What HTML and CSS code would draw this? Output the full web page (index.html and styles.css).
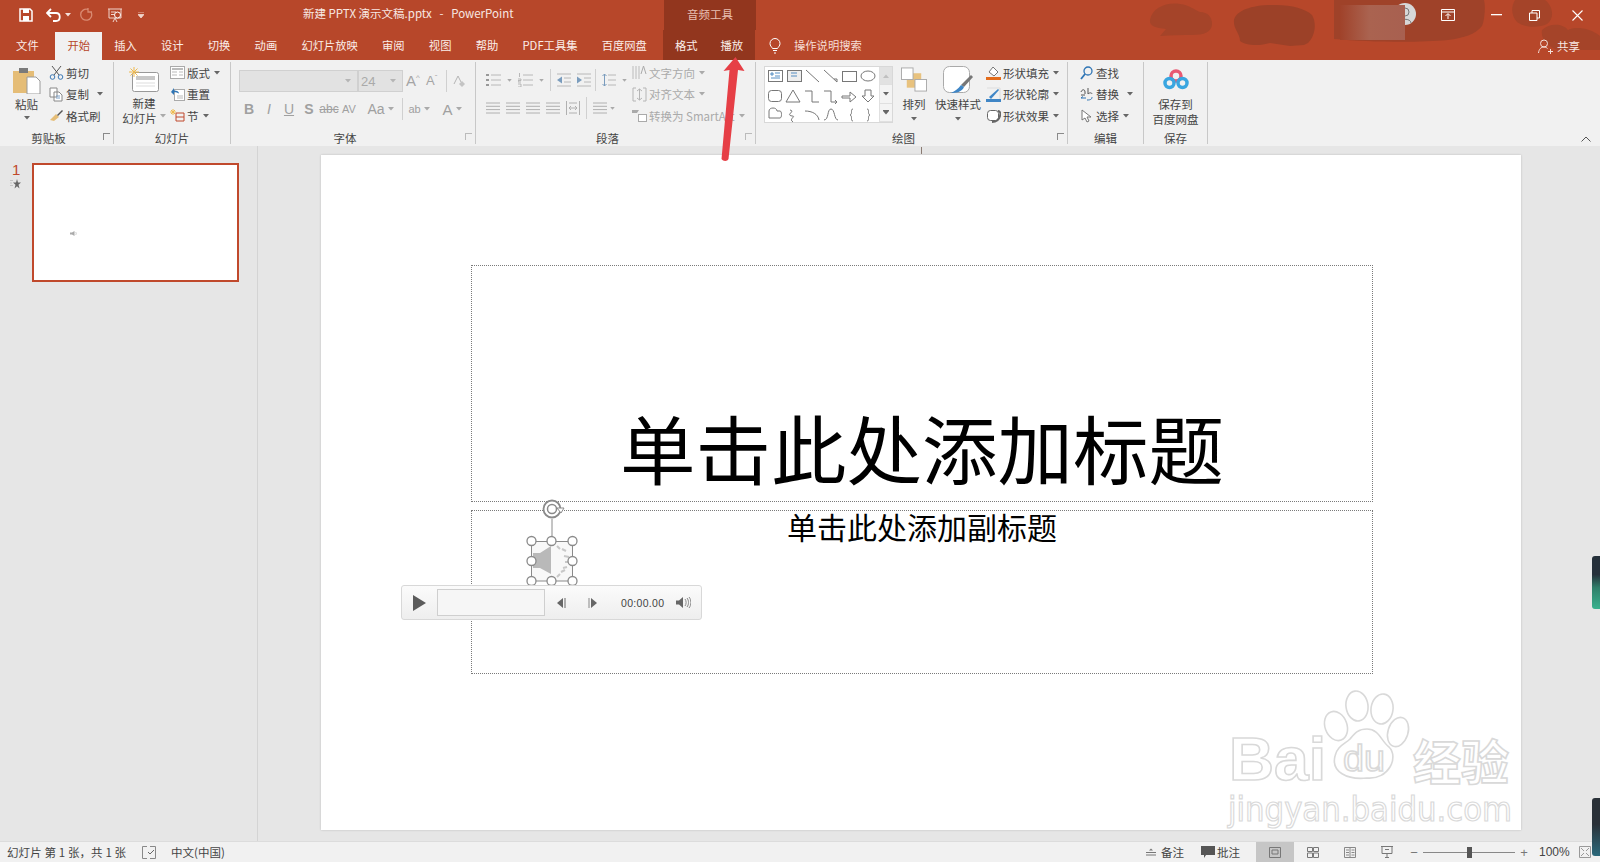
FILE: index.html
```html
<!DOCTYPE html>
<html lang="zh-CN">
<head>
    <meta charset="UTF-8">
    <title>新建 PPTX 演示文稿.pptx - PowerPoint</title>
    <link rel="stylesheet" href="styles.css">
</head>
<body>
<svg class="defs" width="0" height="0">
    <symbol id="lines" viewBox="0 0 14 14"><path d="M0 2h14M0 5.300h14M0 8.600h14M0 12h14" stroke="#b0b0b0" fill="none"/></symbol>
    <symbol id="bullets" viewBox="0 0 15 14"><path d="M5 2h10M5 7h10M5 12h10" stroke="#b8b8b8" fill="none"/><path d="M0 1h3v2H0zM0 6h3v2H0zM0 11h3v2H0z" fill="#999"/></symbol>
    <symbol id="numbers" viewBox="0 0 15 14"><path d="M5 2h10M5 7h10M5 12h10" stroke="#b8b8b8" fill="none"/><path d="M1.500 0v4M0 6h3v1.500H0V9h3M0 11h3v3H0" stroke="#aaa" fill="none" stroke-width="0.800"/></symbol>
    <symbol id="outdent" viewBox="0 0 14 14"><path d="M0 1h14M7 5h7M7 9h7M0 13h14" stroke="#b8b8b8" fill="none"/><path d="M5 3.500v7L0 7z" fill="#7a9cbd"/></symbol>
    <symbol id="indent" viewBox="0 0 14 14"><path d="M0 1h14M7 5h7M7 9h7M0 13h14" stroke="#b8b8b8" fill="none"/><path d="M0 3.500v7L5 7z" fill="#7a9cbd"/></symbol>
    <symbol id="spacing" viewBox="0 0 14 14"><path d="M6 2h8M6 7h8M6 12h8" stroke="#b8b8b8" fill="none"/><path d="M2.500 1v12M.5 3l2-2 2 2M.5 11l2 2 2-2" stroke="#7a9cbd" fill="none"/></symbol>
    <symbol id="distribute" viewBox="0 0 14 14"><path d="M.5 0v14M13.500 0v14M3 2h8M3 12h8M3 7h8M3 7l2-2M3 7l2 2M11 7L9 5M11 7L9 9" stroke="#b0b0b0" fill="none"/></symbol>
    <symbol id="caret" viewBox="0 0 6 4"><path d="M0 0h6L3 3.500z" fill="currentColor"/></symbol>
</svg>
<div class="app">
    <header class="chrome">
        <svg class="blobs" width="470" height="60" viewBox="1130 0 470 60">
            <defs><linearGradient id="blur" x1="0" x2="1"><stop offset="0" stop-color="#a0422a"/><stop offset="0.45" stop-color="#aa6350"/><stop offset="1" stop-color="#a86050"/></linearGradient></defs>
            <path d="M1150 20c2-12 16-18 30-16 10 1 14 6 20 8 8 0 12 5 12 12 0 8-8 11-20 11-10 0-20 0-32 1l6-7c-10-1-17-3-16-9z" fill="#a54429"/>
            <path d="M1234 20c2-10 20-16 42-15 16 0 30 4 36 10 5 8 3 22-4 28l-4 2-14 1-20-3c-10 3-24 3-30-2 0-8-7-12-6-21z" fill="#9c4128"/>
            <path d="M1334 0h150c2 8 0 22-2 26-6 8-18 12-34 14-30 3-80 2-114-1z" fill="#9f4229"/>
            <circle cx="1405" cy="14" r="11" fill="#d7d7d7"/>
            <path d="M1405 8a3.500 3.500 0 110 8 3.500 3.500 0 010-8zM1399 23c0-5 12-5 12 0" fill="none" stroke="#777"/>
            <rect x="1340" y="5" width="65" height="35" fill="url(#blur)"/>
            <path d="M1515 0h30c8 6 10 18 2 24-8 4-22 4-30-2-6-6-6-16-2-22zM1542 30c8-8 22-6 26 0 8-4 22-2 32 6v14h-42c-8-2-18-10-16-20z" fill="#a54429"/>
        </svg>
        <div class="title-row">
            <div class="qat">
                <svg width="14" height="14" viewBox="0 0 14 14"><path d="M1 1h10l2 2v10H1z" fill="none" stroke="#fff" stroke-width="1.500"/><rect x="4" y="1" width="6" height="4" fill="#fff"/><rect x="4" y="8" width="6" height="5" fill="#fff"/></svg>
                <svg class="undo" width="16" height="14" viewBox="0 0 16 14"><path d="M5 1L1 5l4 4M1 5h9c5 0 5 8 0 8H7" fill="none" stroke="#fff" stroke-width="1.800"/></svg>
                <svg class="caret-light" width="6" height="4"><use href="#caret"/></svg>
                <svg class="redo" width="14" height="14" viewBox="0 0 14 14"><path d="M11 4a5.500 5.500 0 11-3-2.500M8 0v4h4" fill="none" stroke="#d98a72" stroke-width="1.300"/></svg>
                <svg class="present" width="16" height="15" viewBox="0 0 16 15"><path d="M1 1h14M2 1v9h12V1M4 4h5M4 6.500h3M8 10l-2 4M8 10l2 4" fill="none" stroke="#f0d5cc"/><circle cx="10.500" cy="7" r="3" fill="#b7472a" stroke="#fff"/></svg>
                <svg class="caret-light custom" width="6" height="6" viewBox="0 0 6 6"><path d="M0 0h6M0 2.500h6L3 6z" stroke="#f0d5cc" stroke-width="0.800" fill="#f0d5cc"/></svg>
            </div>
            <div class="doc-title">新建 PPTX 演示文稿.pptx &nbsp;&nbsp;-&nbsp;&nbsp; PowerPoint</div>
            <div class="tool-title">音频工具</div>
            <div class="win-btns">
                <svg class="btn-display" width="14" height="12" viewBox="0 0 14 12"><path d="M.5.500h13v11H.500zM.5 3h13M7 10V5M4.500 7L7 4.500 9.500 7" fill="none" stroke="#fff"/></svg>
                <svg class="btn-min" width="11" height="2"><rect width="11" height="1.300" fill="#fff"/></svg>
                <svg class="btn-max" width="11" height="11" viewBox="0 0 11 11"><path d="M.5 3h7.500v7.500H.500zM3 3V.500h7.500V8H8" fill="none" stroke="#fff"/></svg>
                <svg class="btn-close" width="11" height="11" viewBox="0 0 11 11"><path d="M.5.500l10 10M10.500.500l-10 10" stroke="#fff" stroke-width="1.100"/></svg>
            </div>
        </div>
        <nav class="tab-row">
            <span class="tab tab-file">文件</span>
            <span class="tab active">开始</span>
            <span class="tab">插入</span>
            <span class="tab">设计</span>
            <span class="tab">切换</span>
            <span class="tab">动画</span>
            <span class="tab">幻灯片放映</span>
            <span class="tab">审阅</span>
            <span class="tab">视图</span>
            <span class="tab">帮助</span>
            <span class="tab">PDF工具集</span>
            <span class="tab">百度网盘</span>
            <div class="tool-tabs">
                <span class="tab">格式</span>
                <span class="tab">播放</span>
            </div>
            <svg class="bulb" width="12" height="16" viewBox="0 0 12 16"><path d="M3.500 10.500C2.500 8.500 1 8 1 5.500a5 5 0 0110 0C11 8 9.500 8.500 8.500 10.500zM4 12.500h4M5 15h2" fill="none" stroke="#fff"/></svg>
            <span class="search-hint">操作说明搜索</span>
            <div class="share">
                <svg width="15" height="15" viewBox="0 0 15 15"><path d="M6 1a3.500 3.500 0 110 7 3.500 3.500 0 010-7zM.5 14c.5-4 2.500-6 5.500-6 1.500 0 2.500.500 3.500 1.500M10 12.500h5M12.500 10v5" fill="none" stroke="#f4e0da"/></svg>
                <span>共享</span>
            </div>
        </nav>
    </header>

    <section class="ribbon">
        <div class="group g-clip">
            <div class="group-body">
                <div class="large paste">
                    <svg width="28" height="27" viewBox="0 0 28 27"><rect x="0" y="4" width="21" height="22" fill="#e5bd77"/><rect x="6" y="1" width="9" height="5" fill="#7a7a7a"/><path d="M14 10h9l4 4v13H14z" fill="#fff" stroke="#9a9a9a"/></svg>
                    <span class="large-text">粘贴</span>
                    <svg class="caret" width="6" height="4"><use href="#caret"/></svg>
                </div>
                <div class="small-col">
                    <div class="small"><svg width="15" height="15" viewBox="0 0 15 15"><path d="M3 1l7 9M12 1L5 10" stroke="#555" fill="none"/><circle cx="3.500" cy="12" r="2.300" fill="none" stroke="#3b78b5"/><circle cx="11.500" cy="12" r="2.300" fill="none" stroke="#3b78b5"/></svg><span>剪切</span></div>
                    <div class="small"><svg width="15" height="15" viewBox="0 0 15 15"><path d="M1 1h7v9H1zM5 5h5l3 3v6H5z" fill="#fff" stroke="#888"/><path d="M7 9h4M7 11h4" stroke="#7aa0c8"/></svg><span>复制</span><svg class="caret far" width="6" height="4"><use href="#caret"/></svg></div>
                    <div class="small"><svg width="15" height="15" viewBox="0 0 15 15"><path d="M1 12l6-6 3 3-5 4z" fill="#e5bd77"/><path d="M8 7l5-5 1 1-5 5z" fill="#555"/></svg><span>格式刷</span></div>
                </div>
            </div>
            <div class="group-label">剪贴板</div>
            <i class="launcher"></i>
        </div>

        <div class="group g-slides">
            <div class="group-body">
                <div class="large new-slide">
                    <svg width="30" height="25" viewBox="0 0 30 25"><rect x="3.500" y="5.500" width="26" height="19" rx="2" fill="#fff" stroke="#999"/><rect x="7" y="9" width="19" height="4" fill="#c8c8c8"/><path d="M7 16h19M7 19h19" stroke="#ddd"/><path d="M5 0v10M0 5h10M1.500 1.500l7 7M8.500 1.500l-7 7" stroke="#eeb94e"/></svg>
                    <span class="large-text">新建</span>
                    <span class="large-text">幻灯片<svg class="caret inline" width="6" height="4"><use href="#caret"/></svg></span>
                </div>
                <div class="small-col">
                    <div class="small"><svg width="15" height="13" viewBox="0 0 15 13"><rect x=".5" y=".5" width="14" height="12" fill="#fff" stroke="#aaa"/><rect x="2" y="2" width="11" height="2" fill="#bbb"/><path d="M2 6h5M2 9h5M9 6h4M9 9h4" stroke="#bbb"/></svg><span>版式</span><svg class="caret" width="6" height="4"><use href="#caret"/></svg></div>
                    <div class="small"><svg width="15" height="14" viewBox="0 0 15 14"><rect x="4.500" y="2.500" width="10" height="11" fill="#fff" stroke="#aaa"/><path d="M1 5l3-4v2.500c3 0 5 1 5 3-1.500-1-3-1.300-5-1.300V8z" fill="#2f75b5"/><path d="M7 9h6M7 11h6" stroke="#bbb"/></svg><span>重置</span></div>
                    <div class="small"><svg width="15" height="14" viewBox="0 0 15 14"><path d="M3 0v6M0 3h6M1 1l4 4M5 1L1 5" stroke="#eeb94e"/><path d="M6 4h8M6 8h8M6 12h8M6 4v8M14 4v8" stroke="#c0492c" fill="none"/></svg><span>节</span><svg class="caret" width="6" height="4"><use href="#caret"/></svg></div>
                </div>
            </div>
            <div class="group-label">幻灯片</div>
        </div>

        <div class="group g-font">
            <div class="group-body stack">
                <div class="row font-top">
                    <div class="select font-name"><svg class="caret" width="6" height="4"><use href="#caret"/></svg></div>
                    <div class="select font-size"><span>24</span><svg class="caret" width="6" height="4"><use href="#caret"/></svg></div>
                    <span class="glyph big">A<sup>^</sup></span>
                    <span class="glyph small-a">A<sup>ˇ</sup></span>
                    <i class="vsep"></i>
                    <svg class="eraser" width="13" height="13" viewBox="0 0 13 13"><path d="M1 9L5 1l3 6" fill="none" stroke="#b5b5b5"/><path d="M6 9l3-3 3 3-3 3z" fill="#c4c4c4"/></svg>
                </div>
                <div class="row font-bottom">
                    <b class="fmt">B</b><i class="fmt">I</i><u class="fmt">U</u><b class="fmt shadow">S</b>
                    <s class="fmt abc">abc</s>
                    <span class="fmt av">AV</span>
                    <span class="fmt aa">Aa<svg class="caret inline" width="6" height="4"><use href="#caret"/></svg></span>
                    <i class="vsep"></i>
                    <span class="fmt hl">ab<svg class="caret inline" width="6" height="4"><use href="#caret"/></svg></span>
                    <span class="fmt color-a">A<svg class="caret inline" width="6" height="4"><use href="#caret"/></svg></span>
                </div>
            </div>
            <div class="group-label">字体</div>
            <i class="launcher faint"></i>
        </div>

        <div class="group g-para">
            <div class="group-body">
                <div class="stack para-left">
                    <div class="row para-top">
                        <svg width="15" height="14"><use href="#bullets"/></svg><svg class="caret" width="5" height="3"><use href="#caret"/></svg>
                        <svg class="m6" width="15" height="14"><use href="#numbers"/></svg><svg class="caret" width="5" height="3"><use href="#caret"/></svg>
                        <i class="vsep m6"></i>
                        <svg class="m6" width="14" height="14"><use href="#outdent"/></svg>
                        <svg class="m6" width="14" height="14"><use href="#indent"/></svg>
                        <i class="vsep m4"></i>
                        <svg class="m6" width="14" height="14"><use href="#spacing"/></svg><svg class="caret" width="5" height="3"><use href="#caret"/></svg>
                    </div>
                    <div class="row para-bottom">
                        <svg width="14" height="14"><use href="#lines"/></svg>
                        <svg class="m6" width="14" height="14"><use href="#lines"/></svg>
                        <svg class="m6" width="14" height="14"><use href="#lines"/></svg>
                        <svg class="m6" width="14" height="14"><use href="#lines"/></svg>
                        <svg class="m6" width="14" height="14"><use href="#distribute"/></svg>
                        <i class="vsep m6"></i>
                        <svg class="m6" width="14" height="14"><use href="#lines"/></svg><svg class="caret" width="5" height="3"><use href="#caret"/></svg>
                    </div>
                </div>
                <div class="small-col faded">
                    <div class="small"><svg width="15" height="15" viewBox="0 0 15 15"><path d="M1 1v13M4 1v13M7 1v13" stroke="#bbb"/><path d="M9 9l2.500-8L14 9" fill="none" stroke="#aaa"/></svg><span>文字方向</span><svg class="caret" width="6" height="4"><use href="#caret"/></svg></div>
                    <div class="small"><svg width="15" height="15" viewBox="0 0 15 15"><path d="M4 1H1v13h3M11 1h3v13h-3M7.500 2v11M5 4l2.500-2L10 4M5 11l2.500 2 2.500-2" fill="none" stroke="#b5b5b5"/></svg><span>对齐文本</span><svg class="caret" width="6" height="4"><use href="#caret"/></svg></div>
                    <div class="small"><svg width="15" height="15" viewBox="0 0 15 15"><path d="M0 2h7L5 5H0z" fill="#aaa"/><rect x="6.500" y="6.500" width="8" height="7" fill="#fff" stroke="#aaa"/></svg><span>转换为 SmartArt</span><svg class="caret" width="6" height="4"><use href="#caret"/></svg></div>
                </div>
            </div>
            <div class="group-label">段落</div>
            <i class="launcher faint"></i>
        </div>

        <div class="group g-draw">
            <div class="group-body">
                <div class="gallery">
                    <svg class="shapes" width="114" height="56" viewBox="0 0 114 56">
                        <g fill="none" stroke="#777">
                            <rect x="3.500" y="3.500" width="14" height="11" fill="#fff"/><rect x="22.500" y="3.500" width="14" height="11" fill="#eee"/>
                            <path d="M41 3l13 12M59 3l13 12M72 15v-3h-3"/>
                            <rect x="77.500" y="4.500" width="14" height="10"/><ellipse cx="103" cy="9" rx="7" ry="5"/>
                            <rect x="3.500" y="23.500" width="13" height="11" rx="3"/><path d="M28 23l7 12H21zM40 24h7v11h7M59 24h7v11h6M70 33l2 2-2 2"/>
                            <path d="M77 29h8v-4l6 5-6 5v-4h-8zM100 23h6v6h3l-6 6-6-6h3z"/>
                            <path d="M4 51v-7c0-4 8-4 8 0h3c2 0 2 7 0 7zM25 43c6 1-5 5 2 6 5 0-4 3 1 6M40 44c7 0 13 3 14 9M59 53c5 0 3-11 7-11s3 11 7 11"/>
                            <path d="M88 42c-3 0 0 5-3 6 3 1 0 6 3 6M102 42c3 0 0 5 3 6-3 1 0 6-3 6"/>
                        </g>
                        <path d="M6 6h2v2H6zM10 6h5M10 9h5M6 11h9M26 6h6M26 9h6" stroke="#2f75b5" fill="none" stroke-width="0.800"/>
                    </svg>
                    <div class="gallery-scroll">
                        <span class="off"><svg class="caret up" width="6" height="4"><use href="#caret"/></svg></span>
                        <span><svg class="caret" width="6" height="4"><use href="#caret"/></svg></span>
                        <span><svg class="caret lined" width="6" height="4"><use href="#caret"/></svg></span>
                    </div>
                </div>
                <div class="large arrange">
                    <svg width="26" height="25" viewBox="0 0 27 25"><rect x="6" y="6" width="15" height="15" fill="#e8c27e"/><rect x=".5" y=".5" width="12" height="12" fill="#fff" stroke="#aaa"/><rect x="14.500" y="12.500" width="12" height="12" fill="#fff" stroke="#aaa"/></svg>
                    <span class="large-text">排列</span>
                    <svg class="caret" width="6" height="4"><use href="#caret"/></svg>
                </div>
                <div class="large quick">
                    <svg width="30" height="28" viewBox="0 0 30 28"><rect x=".5" y=".5" width="26" height="26" rx="6" fill="#fff" stroke="#aaa"/><path d="M28 9l2 2-9 10-3-2z" fill="#777"/><path d="M18 19l3 2c-2 5-8 6-13 6 4-2 7-4 10-8z" fill="#3f86c6"/></svg>
                    <span class="large-text">快速样式</span>
                    <svg class="caret" width="6" height="4"><use href="#caret"/></svg>
                </div>
                <div class="small-col shape-col">
                    <div class="small"><svg width="15" height="15" viewBox="0 0 15 15"><path d="M3 7l4-5 5 5-4 4z" fill="#fff" stroke="#777"/><rect y="12" width="15" height="3" fill="#e36c1c"/></svg><span>形状填充</span><svg class="caret" width="6" height="4"><use href="#caret"/></svg></div>
                    <div class="small"><svg width="15" height="15" viewBox="0 0 15 15"><path d="M1 1h13v11" fill="none" stroke="#ddd"/><path d="M3 10l9-8 1 1-8 9z" fill="#3f86c6"/><rect y="12" width="15" height="3" fill="#3f86c6"/></svg><span>形状轮廓</span><svg class="caret" width="6" height="4"><use href="#caret"/></svg></div>
                    <div class="small"><svg width="15" height="15" viewBox="0 0 15 15"><rect x="1.500" y="2.500" width="11" height="10" rx="3" fill="#fff" stroke="#666"/><path d="M12 3c2 0 3 2 2 5-1 4-3 6-8 6" fill="none" stroke="#666" stroke-width="2"/></svg><span>形状效果</span><svg class="caret" width="6" height="4"><use href="#caret"/></svg></div>
                </div>
            </div>
            <div class="group-label">绘图</div>
            <i class="launcher"></i>
        </div>

        <div class="group g-edit">
            <div class="group-body">
                <div class="small-col">
                    <div class="small"><svg width="13" height="14" viewBox="0 0 13 14"><circle cx="8" cy="5" r="4" fill="none" stroke="#2f75b5" stroke-width="1.300"/><path d="M5 8l-4 5" stroke="#2f75b5" stroke-width="1.800"/></svg><span>查找</span></div>
                    <div class="small"><svg width="13" height="14" viewBox="0 0 13 14"><path d="M1 5c1-3 4-3 4 0v2M1 8h4M8 1v6c2-2 4-1 4 0" fill="none" stroke="#555"/><path d="M1 11h5M1 11l2-1.500M7 13c4 0 5-1 5-3" fill="none" stroke="#2f75b5"/></svg><span>替换</span><svg class="caret far" width="6" height="4"><use href="#caret"/></svg></div>
                    <div class="small"><svg width="13" height="14" viewBox="0 0 13 14"><path d="M2 1v10l3-2 2 4 2-1-2-4h4z" fill="#fff" stroke="#777"/></svg><span>选择</span><svg class="caret" width="6" height="4"><use href="#caret"/></svg></div>
                </div>
            </div>
            <div class="group-label">编辑</div>
        </div>

        <div class="group g-save">
            <div class="group-body">
                <div class="large cloud">
                    <svg width="26" height="21" viewBox="0 0 26 21"><circle cx="13" cy="7" r="5" fill="none" stroke="#e95a72" stroke-width="3.500"/><circle cx="6.500" cy="14" r="4.500" fill="none" stroke="#3aa6e0" stroke-width="3.500"/><circle cx="19.500" cy="14" r="4.500" fill="none" stroke="#3aa6e0" stroke-width="3.500"/></svg>
                    <span class="large-text">保存到</span>
                    <span class="large-text">百度网盘</span>
                </div>
            </div>
            <div class="group-label">保存</div>
        </div>

        <svg class="collapse" width="10" height="6" viewBox="0 0 10 6"><path d="M.5 5.500L5 1l4.500 4.500" fill="none" stroke="#555"/></svg>
    </section>

    <main class="workspace">
        <aside class="thumbs">
            <div class="thumb-meta">
                <span class="thumb-num">1</span>
                <svg width="11" height="10" viewBox="0 0 11 10"><path d="M7 0l1 3.500h3L8.500 5.700l1 3.800L7 7.300 4.500 9.500l1-3.800L3 3.500h3z" fill="#666"/><path d="M0 1.500h3M0 4h2M0 6.500h3" stroke="#bbb" stroke-width="0.800"/></svg>
            </div>
            <div class="thumb">
                <svg width="7" height="7" viewBox="0 0 7 7"><path d="M0 2.500h2L4.500 1v5L2 4.500H0z" fill="#aaa"/><path d="M5.500 2c1 1 1 2 0 3" stroke="#ccc" fill="none"/></svg>
            </div>
        </aside>
        <div class="stage">
            <i class="ruler-tick"></i>
            <div class="slide">
                <div class="placeholder title-box">单击此处添加标题</div>
                <div class="placeholder sub-box">单击此处添加副标题</div>

                <div class="audio-icon">
                    <svg width="70" height="90" viewBox="0 0 70 90">
                        <path d="M34 20v22" stroke="#8a8a8a"/>
                        <circle cx="34" cy="10" r="8.500" fill="#fff" stroke="#8a8a8a" stroke-width="1.800"/>
                        <circle cx="34" cy="10" r="4.500" fill="none" stroke="#8a8a8a" stroke-width="1.500"/>
                        <path d="M39 9l7 0-3 5z" fill="#fff" stroke="#8a8a8a"/>
                        <rect x="13.500" y="42.500" width="41" height="39.500" fill="#f8f8f8" stroke="#8a8a8a"/>
                        <path d="M15 54h7l11-7v28l-11-6h-7z" fill="#b9b9b9"/>
                        <path d="M39 47l3 3M44 50l4 2M46 57l5 1M47 63h5M45 69l4-1M43 73l4-2M39 78l3-3" stroke="#c8c8c8" stroke-width="2"/>
                        <g fill="#fff" stroke="#8a8a8a" stroke-width="1.300">
                            <circle cx="13.500" cy="42" r="4.500"/><circle cx="33.500" cy="42" r="4.500"/><circle cx="54.500" cy="42" r="4.500"/>
                            <circle cx="13.500" cy="62" r="4.500"/><circle cx="54.500" cy="62" r="4.500"/>
                            <circle cx="13.500" cy="82" r="4.500"/><circle cx="33.500" cy="82" r="4.500"/><circle cx="54.500" cy="82" r="4.500"/>
                        </g>
                    </svg>
                </div>
                <div class="player">
                    <svg class="p-play" width="13" height="16" viewBox="0 0 13 16"><path d="M0 0l13 8-13 8z" fill="#5b5b5b"/></svg>
                    <div class="p-track"></div>
                    <svg class="p-prev" width="9" height="10" viewBox="0 0 9 10"><path d="M6 0v10L0 5z" fill="#666"/><path d="M8 0v10" stroke="#666"/></svg>
                    <svg class="p-next" width="9" height="10" viewBox="0 0 9 10"><path d="M3 0v10l6-5z" fill="#666"/><path d="M1 0v10" stroke="#888"/></svg>
                    <span class="p-time">00:00.00</span>
                    <svg class="p-vol" width="15" height="11" viewBox="0 0 15 11"><path d="M0 3.500h3L7 0v11L3 7.500H0z" fill="#666"/><path d="M9 2c1.500 2 1.500 5 0 7M11 1c2 2.500 2 6.500 0 9M13 0c2.500 3 2.500 8 0 11" fill="none" stroke="#888"/></svg>
                </div>
            </div>
        </div>
        <svg class="watermark" width="300" height="170" viewBox="1222 670 300 170">
            <g fill="#fff" stroke="#d9d9d9" stroke-width="1.600">
                <ellipse cx="1357" cy="706" rx="11" ry="15" transform="rotate(-8 1357 706)"/>
                <ellipse cx="1382" cy="709" rx="11" ry="15" transform="rotate(8 1382 709)"/>
                <ellipse cx="1336" cy="726" rx="11" ry="15" transform="rotate(-20 1336 726)"/>
                <ellipse cx="1398" cy="732" rx="10" ry="15" transform="rotate(18 1398 732)"/>
                <path d="M1367 729c12 0 14 12 22 18 10 10 0 33-22 31-20 2-36-6-32-22 2-10 10-12 15-17 5-6 8-10 17-10z"/>
                <text x="1229" y="780" class="wm-bai" textLength="97" lengthAdjust="spacingAndGlyphs">Bai</text>
                <text x="1343" y="771" class="wm-du" textLength="42" lengthAdjust="spacingAndGlyphs">du</text>
                <text x="1413" y="780" class="wm-cn">经验</text>
                <text x="1228" y="821" class="wm-url" textLength="284" lengthAdjust="spacingAndGlyphs">jingyan.baidu.com</text>
            </g>
        </svg>
    </main>

    <footer class="status">
        <span class="st-count">幻灯片 第 1 张，共 1 张</span>
        <svg class="st-check" width="14" height="13" viewBox="0 0 14 13"><path d="M5 .5H.5v12H5M8 .5h5.500v12H8" fill="none" stroke="#888"/><path d="M6 6l2 2 4-4" fill="none" stroke="#666"/></svg>
        <span class="st-lang">中文(中国)</span>
        <div class="st-right">
            <svg width="10" height="8" viewBox="0 0 10 8"><path d="M3 2.500L5 .5l2 2z" fill="#777"/><path d="M0 4.500h10M0 7h10" stroke="#777"/></svg>
            <span class="st-label">备注</span>
            <svg class="st-comment" width="14" height="12" viewBox="0 0 14 12"><path d="M0 0h14v9H5l-2 3V9H0z" fill="#555"/></svg>
            <span class="st-label tight">批注</span>
            <div class="views">
                <span class="view on"><svg width="12" height="11" viewBox="0 0 12 11"><path d="M.5.500h11v10H.500zM3 3h6v4H3z" fill="none" stroke="#777"/></svg></span>
                <span class="view"><svg width="12" height="11" viewBox="0 0 12 11"><path d="M.5.500h5v4h-5zM6.500.500h5v4h-5zM.5 6h5v4.500h-5zM6.500 6h5v4.500h-5z" fill="none" stroke="#777"/></svg></span>
                <span class="view"><svg width="12" height="11" viewBox="0 0 12 11"><path d="M.5.500h11v10H.500zM6 .5v10M7.500 3h3M7.500 5.500h3M7.500 8h3M2 3h3M2 5.500h3M2 8h3" fill="none" stroke="#888"/></svg></span>
                <span class="view"><svg width="12" height="12" viewBox="0 0 12 12"><path d="M0 .5h12M1 .5v7h10v-7M6 7.500V11M4 11.500h4M4 3.500h4" fill="none" stroke="#777"/></svg></span>
            </div>
            <div class="zoom-bar">
                <span class="zoom-sign">−</span>
                <div class="zoom-track"><i class="zoom-thumb"></i></div>
                <span class="zoom-sign">+</span>
            </div>
            <span class="zoom-val">100%</span>
            <svg class="st-fit" width="12" height="12" viewBox="0 0 12 12"><path d="M.5.500h11v11H.500z" fill="none" stroke="#999"/><path d="M2 2l3 3M10 10L7 7M10 2L7 5M2 10l3-3" stroke="#999"/></svg>
        </div>
    </footer>
</div>

<!-- things drawn over the screenshot -->
<svg class="red-arrow" width="30" height="108" viewBox="718 56 30 108">
    <path d="M735.500 57l9 14-6.500-1-9.500 89c-1 2.500-5.500 2.500-7 0l8-89-6 1z" fill="#e63f46"/>
</svg>
<div class="side-widget top"></div>
<div class="side-widget bottom"></div>
</body>
</html>
```

FILE: styles.css
```css
* {
    box-sizing: border-box;
}
html, body {
    margin: 0;
    height: 100%;
    overflow: hidden;
}
body {
    font-family: "Noto Sans CJK SC", "Noto Sans", sans-serif;
    font-size: 11.5px;
    color: #444;
    position: relative;
}
svg {
    flex: none;
}
.defs {
    position: absolute;
}
.app {
    display: flex;
    flex-direction: column;
    height: 862px;
    width: 1600px;
}

/* title bar + tabs */
.chrome {
    background: #b7472a;
    color: #fff;
    height: 60px;
    flex: none;
    position: relative;
}
.blobs {
    position: absolute;
    right: 0;
    top: 0;
}
.title-row {
    display: flex;
    align-items: center;
    height: 30px;
    position: relative;
}
.qat {
    width: 303px;
    display: flex;
    align-items: center;
    padding-left: 19px;
}
.undo { margin-left: 13px; }
.caret-light { color: #f4e0da; margin-left: 3px; }
.redo { margin-left: 9px; }
.present { margin-left: 13px; }
.custom { margin-left: 15px; }
.doc-title {
    width: 361px;
    font-size: 11.5px;
    color: #f8e8e3;
    line-height: 27px;
    height: 30px;
    white-space: nowrap;
}
.tool-title {
    width: 92px;
    height: 30px;
    background: #92361e;
    text-align: center;
    line-height: 29px;
    color: #e8bfb2;
}
.win-btns {
    flex: 1;
    display: flex;
    align-items: center;
    padding-left: 685px;
}
.btn-min { margin-left: 36px; }
.btn-max { margin-left: 27px; }
.btn-close { margin-left: 32px; }
.tab-row {
    display: flex;
    align-items: flex-end;
    height: 30px;
    position: relative;
}
.tab {
    padding: 0 12.100px;
    height: 28px;
    font-size: 11.300px;
    line-height: 27px;
    white-space: nowrap;
    color: #fbeee9;
}
.tab-file {
    margin-left: 4px;
    margin-right: 4.500px;
}
.tab.active {
    background: #f1f1f1;
    color: #b7472a;
}
.tool-tabs {
    display: flex;
    align-items: flex-end;
    background: #92361e;
    height: 30px;
    width: 92px;
    margin-left: 4px;
    justify-content: center;
    flex: none;
}
.tool-tabs .tab {
    padding: 0 11.500px;
}
.bulb {
    margin: 0 0 6px 14px;
}
.search-hint {
    margin-left: 13px;
    height: 28px;
    font-size: 11.300px;
    line-height: 27px;
    color: #f6ded6;
}
.share {
    margin-left: auto;
    margin-right: 20px;
    display: flex;
    align-items: center;
    gap: 4px;
    height: 28px;
    color: #f8e8e3;
}

/* ribbon */
.ribbon {
    display: flex;
    height: 86px;
    flex: none;
    background: #f1f1f1;
    padding-top: 2px;
    position: relative;
    color: #444;
}
.group {
    position: relative;
    display: flex;
    flex-direction: column;
    height: 82px;
    border-right: 1px solid #c8c8c8;
    flex: none;
}
.group-body {
    display: flex;
    height: 68px;
    flex: none;
}
.group-label {
    text-align: center;
    line-height: 16px;
    color: #444;
}
.g-clip .group-label, .g-font .group-label, .g-para .group-label, .g-draw .group-label {
    padding-right: 16px;
}
.launcher {
    position: absolute;
    right: 3px;
    bottom: 4px;
    width: 7px;
    height: 7px;
    border: 1px solid #8a8a8a;
    border-width: 1px 0 0 1px;
}
.launcher.faint { border-color: #bbb; }
.g-clip { width: 114px; }
.g-slides { width: 117px; }
.g-font { width: 245px; }
.g-para { width: 280px; }
.g-draw { width: 312px; }
.g-edit { width: 76px; }
.g-save { width: 64px; }

.large {
    display: flex;
    flex-direction: column;
    align-items: center;
    flex: none;
}
.large-text {
    line-height: 14px;
    white-space: nowrap;
    display: flex;
    align-items: center;
}
.caret {
    color: #666;
    flex: none;
    display: block;
}
.inline { margin-left: 3px; }
.paste {
    width: 49px;
    padding: 5px 0 0 4px;
}
.paste .large-text { margin-top: 3px; }
.paste .caret { margin-top: 5px; }
.small-col {
    display: flex;
    flex-direction: column;
}
.small {
    height: 21.500px;
    display: flex;
    align-items: center;
    white-space: nowrap;
}
.small span { margin: 0 4px 0 2px; }
.small .far { margin-left: 4px; }
.new-slide {
    width: 58px;
    padding: 5px 0 0 2px;
}
.new-slide .large-text { line-height: 14.500px; }
.new-slide svg:first-child { margin-bottom: 4px; }
.g-slides .small-col { margin-left: -2px; }

.stack {
    display: flex;
    flex-direction: column;
}
.row {
    display: flex;
    align-items: center;
}
.g-font .stack { padding: 8px 0 0 8px; }
.font-top { height: 22px; }
.font-bottom { height: 28px; margin-top: 3px; color: #a0a0a0; }
.select {
    height: 22px;
    background: #e2e2e2;
    border: 1px solid #d0d0d0;
    display: flex;
    align-items: center;
    justify-content: flex-end;
    padding-right: 6px;
    color: #aaa;
    font-family: "Liberation Sans", sans-serif;
    font-size: 13px;
}
.select .caret { color: #b5b5b5; }
.font-name { width: 119px; }
.font-size {
    width: 45px;
    justify-content: space-between;
    padding-left: 2px;
}
.glyph {
    color: #a5a5a5;
    font-family: "Liberation Sans", sans-serif;
    font-size: 15px;
    line-height: 22px;
    white-space: nowrap;
}
.glyph sup { font-size: 8px; line-height: 0; }
.glyph.big { margin-left: 3px; width: 20px; }
.glyph.small-a { font-size: 13px; width: 20px; }
.vsep {
    display: block;
    width: 1px;
    height: 22px;
    background: #d0d0d0;
    flex: none;
}
.eraser { margin-left: 6px; }
.fmt {
    font-family: "Liberation Sans", sans-serif;
    font-size: 14px;
    width: 20px;
    text-align: center;
    display: flex;
    align-items: center;
    justify-content: center;
    flex: none;
}
.abc { font-size: 12px; }
.av { font-size: 11px; }
.aa { width: 37px; margin-left: 3px; font-size: 14px; }
.font-bottom .vsep { margin-left: 3px; }
.hl { width: 32px; font-size: 11px; }
.color-a { width: 34px; font-size: 15px; }
.caret.inline { color: #aaa; }

.para-left { width: 156px; padding: 7px 0 0 10px; }
.para-top { height: 22px; }
.para-top .caret { color: #aaa; margin-left: 6px; }
.para-bottom { height: 22px; margin-top: 6px; }
.para-bottom .caret { color: #aaa; margin-left: 3px; }
.m4 { margin-left: 4px; }
.m6 { margin-left: 6px; }
.faded { color: #aaa; }
.faded .caret { color: #aaa; }

.gallery {
    display: flex;
    width: 129px;
    height: 57px;
    margin: 4px 0 0 8px;
    background: #fff;
    border: 1px solid #d8d8d8;
    flex: none;
}
.shapes { display: block; }
.gallery-scroll {
    width: 14px;
    display: flex;
    flex-direction: column;
    border-left: 1px solid #e0e0e0;
}
.gallery-scroll span {
    flex: 1;
    display: flex;
    align-items: center;
    justify-content: center;
    background: #f4f4f4;
    border-bottom: 1px solid #e0e0e0;
}
.gallery-scroll .off { background: #e2e2e2; }
.gallery-scroll .off .caret { color: #c0c0c0; }
.caret.up { transform: rotate(180deg); }
.caret.lined { border-top: 1px solid #666; height: 5px; }
.arrange {
    width: 40px;
    padding-top: 5px;
    margin-left: 1px;
    flex: none;
}
.arrange .large-text { margin-top: 5px; }
.arrange .caret, .quick .caret { margin-top: 6px; }
.quick {
    width: 48px;
    padding-top: 4px;
}
.quick .large-text { margin-top: 3px; }
.shape-col { margin-left: 4px; }
.g-edit .small-col { padding-left: 12px; }
.g-edit .small span { margin-left: 3px; }
.cloud {
    width: 100%;
    padding-top: 7px;
}
.cloud .large-text:nth-of-type(1) { margin-top: 7px; }
.cloud .large-text { line-height: 14.500px; }
.collapse {
    position: absolute;
    right: 9px;
    bottom: 4px;
}

/* thumbnails + slide */
.workspace {
    flex: 1;
    display: flex;
    background: #e6e6e6;
    position: relative;
    min-height: 0;
}
.thumbs {
    width: 258px;
    flex: none;
    border-right: 1px solid #d4d4d4;
    display: flex;
    padding: 17px 0 0 10px;
    align-items: flex-start;
}
.thumb-meta {
    width: 22px;
    display: flex;
    flex-direction: column;
    align-items: flex-start;
}
.thumb-num {
    font-family: "Liberation Sans", sans-serif;
    font-size: 15px;
    line-height: 13px;
    color: #c0492c;
    margin: 0 0 3px 2px;
}
.thumb {
    width: 207px;
    height: 119px;
    background: #fff;
    border: 2.500px solid #c0492c;
    display: flex;
    align-items: center;
    padding-left: 36px;
    padding-top: 22px;
}
.stage {
    flex: 1;
    position: relative;
    padding: 9px 0 0 63px;
}
.ruler-tick {
    position: absolute;
    left: 663px;
    top: 1px;
    height: 7px;
    width: 1px;
    background: #8a7a72;
}
.slide {
    width: 1200px;
    height: 675px;
    background: #fff;
    position: relative;
    box-shadow: 0 0 2px #bcbcbc;
}
.placeholder {
    position: absolute;
    left: 150px;
    width: 902px;
    border: 1px dotted #7a7a7a;
    display: flex;
    justify-content: center;
    color: #000;
}
.title-box {
    top: 110px;
    height: 237px;
    align-items: flex-end;
    font-size: 75.500px;
    line-height: 90px;
    padding-bottom: 10px;
    white-space: nowrap;
}
.sub-box {
    top: 355px;
    height: 164px;
    font-size: 30px;
    line-height: 30px;
}
.audio-icon {
    position: absolute;
    left: 197px;
    top: 344px;
}
.player {
    position: absolute;
    left: 80px;
    top: 430px;
    width: 301px;
    height: 35px;
    border: 1px solid #d8d8d8;
    border-radius: 3px;
    background: linear-gradient(#fbfbfb, #eeeeee);
    display: flex;
    align-items: center;
}
.p-play { margin-left: 11px; }
.p-track {
    width: 108px;
    height: 27px;
    margin-left: 11px;
    border: 1px solid #cfcfcf;
    background: #f6f6f6;
}
.p-prev { margin-left: 12px; }
.p-next { margin-left: 22px; }
.p-time {
    margin-left: 24px;
    font-family: "Liberation Sans", sans-serif;
    font-size: 10.500px;
    letter-spacing: 0.300px;
    color: #444;
    width: 55px;
}
.watermark {
    position: absolute;
    left: 1222px;
    top: 524px;
}
.wm-bai {
    font-family: "Liberation Sans", sans-serif;
    font-size: 62px;
    font-weight: 700;
}
.wm-du {
    font-family: "Liberation Sans", sans-serif;
    font-size: 36px;
}
.wm-cn {
    font-size: 48px;
    font-weight: 700;
}
.wm-url {
    font-family: "DejaVu Sans", sans-serif;
    font-size: 33px;
    stroke-width: 1.200px;
}

/* status bar */
.status {
    height: 21px;
    flex: none;
    background: #f1f1f1;
    border-top: 1px solid #dcdcdc;
    display: flex;
    align-items: center;
    padding-left: 7px;
    font-size: 11.500px;
    color: #444;
}
.st-check { margin-left: 6px; }
.st-lang { margin-left: 15px; }
.st-count { width: 129px; white-space: nowrap; letter-spacing: 0.100px; }
.st-right {
    margin-left: auto;
    display: flex;
    align-items: center;
    height: 100%;
}
.st-label { margin-left: 5px; }
.st-comment { margin-left: 17px; }
.st-label.tight { margin-left: 2px; }
.views {
    display: flex;
    height: 100%;
    margin-left: 16px;
}
.view {
    width: 37px;
    display: flex;
    align-items: center;
    justify-content: center;
}
.view.on { background: #c6c6c6; width: 38px; }
.zoom-bar {
    display: flex;
    align-items: center;
    margin-left: 3px;
    gap: 3px;
}
.zoom-sign {
    font-family: "Liberation Sans", sans-serif;
    font-size: 13px;
    width: 12px;
    text-align: center;
    color: #777;
}
.zoom-track {
    width: 92px;
    height: 1px;
    background: #888;
    position: relative;
}
.zoom-thumb {
    position: absolute;
    left: 44px;
    top: -5px;
    width: 5px;
    height: 11px;
    background: #555;
}
.zoom-val {
    font-family: "Liberation Sans", sans-serif;
    font-size: 12px;
    margin-left: 9px;
    width: 32px;
}
.st-fit { margin: 0 9px 0 8px; }

/* overlays */
.red-arrow {
    position: absolute;
    left: 718px;
    top: 56px;
}
.side-widget {
    position: absolute;
    right: 0;
    width: 8px;
    border-radius: 3px 0 0 3px;
    background: linear-gradient(#25303a 35%, #2f7f6a 60%, #39b28e);
}
.side-widget.top { top: 556px; height: 53px; }
.side-widget.bottom { top: 798px; height: 58px; background: linear-gradient(#2a3138 45%, #2c6a7c); }
```
